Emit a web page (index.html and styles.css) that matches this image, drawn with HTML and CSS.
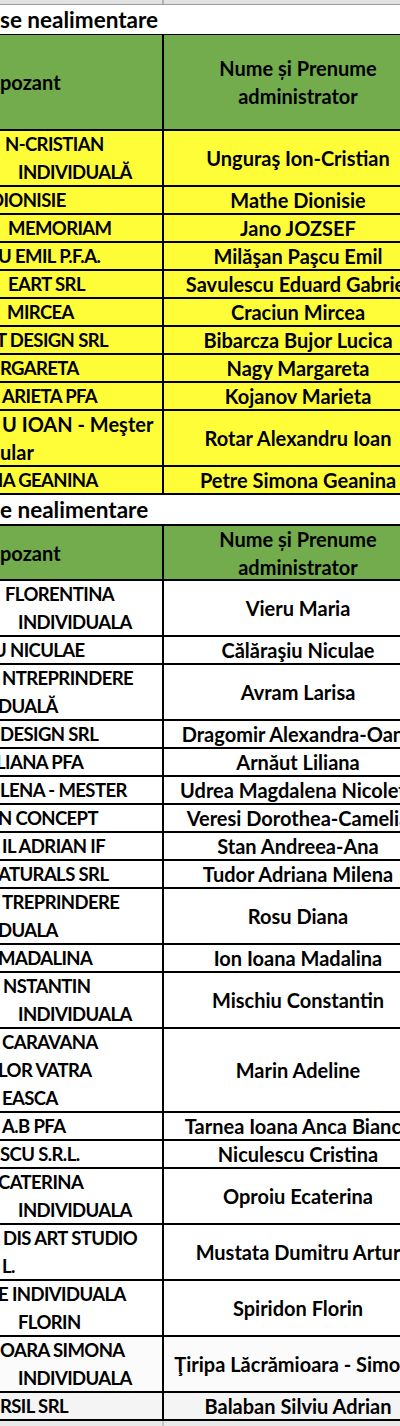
FILE: index.html
```html
<!DOCTYPE html>
<html lang="ro">
<head>
<meta charset="utf-8">
<title>Expozanți</title>
<link rel="stylesheet" href="styles.css">
</head>
<body>
<div class="sheet">
  <div class="top"><div class="top-l"></div><div class="top-r"></div></div>

  <div class="title">se nealimentare</div>
  <div class="row hd1 green">
    <div class="cell l"><span>pozant</span></div>
    <div class="cell r"><span>Nume și Prenume</span><span>administrator</span></div>
  </div>

  <div class="row s2 yellow"><div class="cell l caps"><span class="i5">N-CRISTIAN</span><span class="i18">INDIVIDUALĂ</span></div><div class="cell r"><span>Unguraş Ion-Cristian</span></div></div>
  <div class="row s1 yellow"><div class="cell l caps"><span class="n10">DIONISIE</span></div><div class="cell r"><span>Mathe Dionisie</span></div></div>
  <div class="row s1 yellow"><div class="cell l caps"><span class="i8">MEMORIAM</span></div><div class="cell r"><span>Jano JOZSEF</span></div></div>
  <div class="row s1 yellow"><div class="cell l caps"><span class="n2">U EMIL P.F.A.</span></div><div class="cell r"><span>Milăşan Paşcu Emil</span></div></div>
  <div class="row s1 yellow"><div class="cell l caps"><span class="i8">EART SRL</span></div><div class="cell r"><span>Savulescu Eduard Gabriel</span></div></div>
  <div class="row s1 yellow"><div class="cell l caps"><span class="i7">MIRCEA</span></div><div class="cell r"><span>Craciun Mircea</span></div></div>
  <div class="row s1 yellow"><div class="cell l caps"><span class="n4">T DESIGN SRL</span></div><div class="cell r"><span>Bibarcza Bujor Lucica</span></div></div>
  <div class="row s1 yellow"><div class="cell l caps"><span class="i0">RGARETA</span></div><div class="cell r"><span>Nagy Margareta</span></div></div>
  <div class="row s1 yellow"><div class="cell l caps"><span class="i2">ARIETA PFA</span></div><div class="cell r"><span>Kojanov Marieta</span></div></div>
  <div class="row s2 yellow"><div class="cell l"><span class="i2">U IOAN - Meşter</span><span class="i0">ular</span></div><div class="cell r"><span>Rotar Alexandru Ioan</span></div></div>
  <div class="row s1 yellow"><div class="cell l caps"><span class="n11">NA GEANINA</span></div><div class="cell r"><span>Petre Simona Geanina</span></div></div>

  <div class="title">e nealimentare</div>
  <div class="row hd2 green">
    <div class="cell l"><span>pozant</span></div>
    <div class="cell r"><span>Nume și Prenume</span><span>administrator</span></div>
  </div>

  <div class="row s2"><div class="cell l caps"><span class="i5">FLORENTINA</span><span class="i18">INDIVIDUALA</span></div><div class="cell r"><span>Vieru Maria</span></div></div>
  <div class="row s1"><div class="cell l caps"><span class="n7">U NICULAE</span></div><div class="cell r"><span>Călăraşiu Niculae</span></div></div>
  <div class="row s2"><div class="cell l caps"><span class="i2">NTREPRINDERE</span><span class="n2">DUALĂ</span></div><div class="cell r"><span>Avram Larisa</span></div></div>
  <div class="row s1"><div class="cell l caps"><span class="i0">DESIGN SRL</span></div><div class="cell r"><span>Dragomir Alexandra-Oana</span></div></div>
  <div class="row s1"><div class="cell l caps"><span class="n4">LIANA PFA</span></div><div class="cell r"><span>Arnăut Liliana</span></div></div>
  <div class="row s1"><div class="cell l caps"><span class="i0">LENA - MESTER</span></div><div class="cell r"><span>Udrea Magdalena Nicoleta</span></div></div>
  <div class="row s1"><div class="cell l caps"><span class="n2">N CONCEPT</span></div><div class="cell r"><span>Veresi Dorothea-Camelia</span></div></div>
  <div class="row s1"><div class="cell l caps"><span class="i2">IL ADRIAN IF</span></div><div class="cell r"><span>Stan Andreea-Ana</span></div></div>
  <div class="row s1"><div class="cell l caps"><span class="n2">ATURALS SRL</span></div><div class="cell r"><span>Tudor Adriana Milena</span></div></div>
  <div class="row s2"><div class="cell l caps"><span class="i2">TREPRINDERE</span><span class="n2">DUALA</span></div><div class="cell r"><span>Rosu Diana</span></div></div>
  <div class="row s1"><div class="cell l caps"><span class="n2">MADALINA</span></div><div class="cell r"><span>Ion Ioana Madalina</span></div></div>
  <div class="row s2"><div class="cell l caps"><span class="i3">NSTANTIN</span><span class="i18">INDIVIDUALA</span></div><div class="cell r"><span>Mischiu Constantin</span></div></div>
  <div class="row s3"><div class="cell l caps"><span class="i2">CARAVANA</span><span class="n2">LOR VATRA</span><span class="i2">EASCA</span></div><div class="cell r"><span>Marin Adeline</span></div></div>
  <div class="row s1"><div class="cell l caps"><span class="i2">A.B PFA</span></div><div class="cell r"><span>Tarnea Ioana Anca Bianca</span></div></div>
  <div class="row s1"><div class="cell l caps"><span class="i0">SCU S.R.L.</span></div><div class="cell r"><span>Niculescu Cristina</span></div></div>
  <div class="row s2"><div class="cell l caps"><span class="n2">CATERINA</span><span class="i18">INDIVIDUALA</span></div><div class="cell r"><span>Oproiu Ecaterina</span></div></div>
  <div class="row s2"><div class="cell l caps"><span class="i3">DIS ART STUDIO</span><span class="i2">L.</span></div><div class="cell r"><span>Mustata Dumitru Artur</span></div></div>
  <div class="row s2"><div class="cell l caps"><span class="n2">E INDIVIDUALA</span><span class="i18">FLORIN</span></div><div class="cell r"><span>Spiridon Florin</span></div></div>
  <div class="row s2 fade1"><div class="cell l caps"><span class="i0">OARA SIMONA</span><span class="i18">INDIVIDUALA</span></div><div class="cell r"><span>Ţiripa Lăcrămioara - Simona</span></div></div>
  <div class="row s1 fade2"><div class="cell l caps"><span class="i0">RSIL SRL</span></div><div class="cell r"><span>Balaban Silviu Adrian</span></div></div>
  <div class="bottom"><div class="bottom-l"></div><div class="bottom-r"></div></div>
</div>
</body>
</html>
```

FILE: styles.css
```css
html, body {
  margin: 0;
  padding: 0;
  background: #ffffff;
}

body {
  width: 400px;
  height: 1426px;
  overflow: hidden;
  font-family: Lato, "Open Sans", "Liberation Sans", sans-serif;
  font-weight: 700;
  font-size: 20px;
  color: #000000;
}

.sheet {
  width: 432px;
}

.top {
  display: grid;
  grid-template-columns: 164px 268px;
  height: 4px;
  background: #e2e2e2;
  border-bottom: 1px solid #9c9c9c;
}

.top-l {
  border-right: 2px solid #b3b3b3;
}

.title {
  height: 29px;
  line-height: 29px;
  font-size: 22.5px;
  white-space: nowrap;
  overflow: hidden;
}

.row {
  display: grid;
  grid-template-columns: 164px 268px;
  border-bottom: 2px solid #000000;
  box-sizing: content-box;
}

.hd1 {
  height: 94px;
  border-top: 1px solid #000000;
}

.hd2 {
  height: 53px;
  border-top: 2px solid #000000;
}

.s1 { height: 26px; }
.s2 { height: 54px; }
.s3 { height: 82px; }

.green { background: #72ac4d; }
.yellow { background: #fffd38; }
.fade1 { background: #fbfbfb; }
.fade2 { background: #f4f4f4; }

.cell {
  display: flex;
  flex-direction: column;
  justify-content: center;
  overflow: hidden;
  white-space: nowrap;
  line-height: 28px;
}

.cell.l {
  border-right: 2px solid #000000;
  align-items: flex-start;
}

.cell.caps {
  font-size: 18.5px;
  letter-spacing: -0.6px;
}

.cell.r {
  align-items: center;
  text-align: center;
}

.cell span {
  display: block;
}

.i0 { margin-left: 0; }
.i2 { margin-left: 2px; }
.i3 { margin-left: 3px; }
.i5 { margin-left: 5px; }
.i7 { margin-left: 7px; }
.i8 { margin-left: 8px; }
.i18 { margin-left: 18px; }
.n2 { margin-left: -2px; }
.n4 { margin-left: -4px; }
.n7 { margin-left: -7px; }
.n10 { margin-left: -10px; }
.n11 { margin-left: -11px; }

.bottom {
  display: grid;
  grid-template-columns: 164px 268px;
  height: 10px;
  background: #e9e9e9;
}

.bottom-l {
  border-right: 2px solid #c4c4c4;
}
```
